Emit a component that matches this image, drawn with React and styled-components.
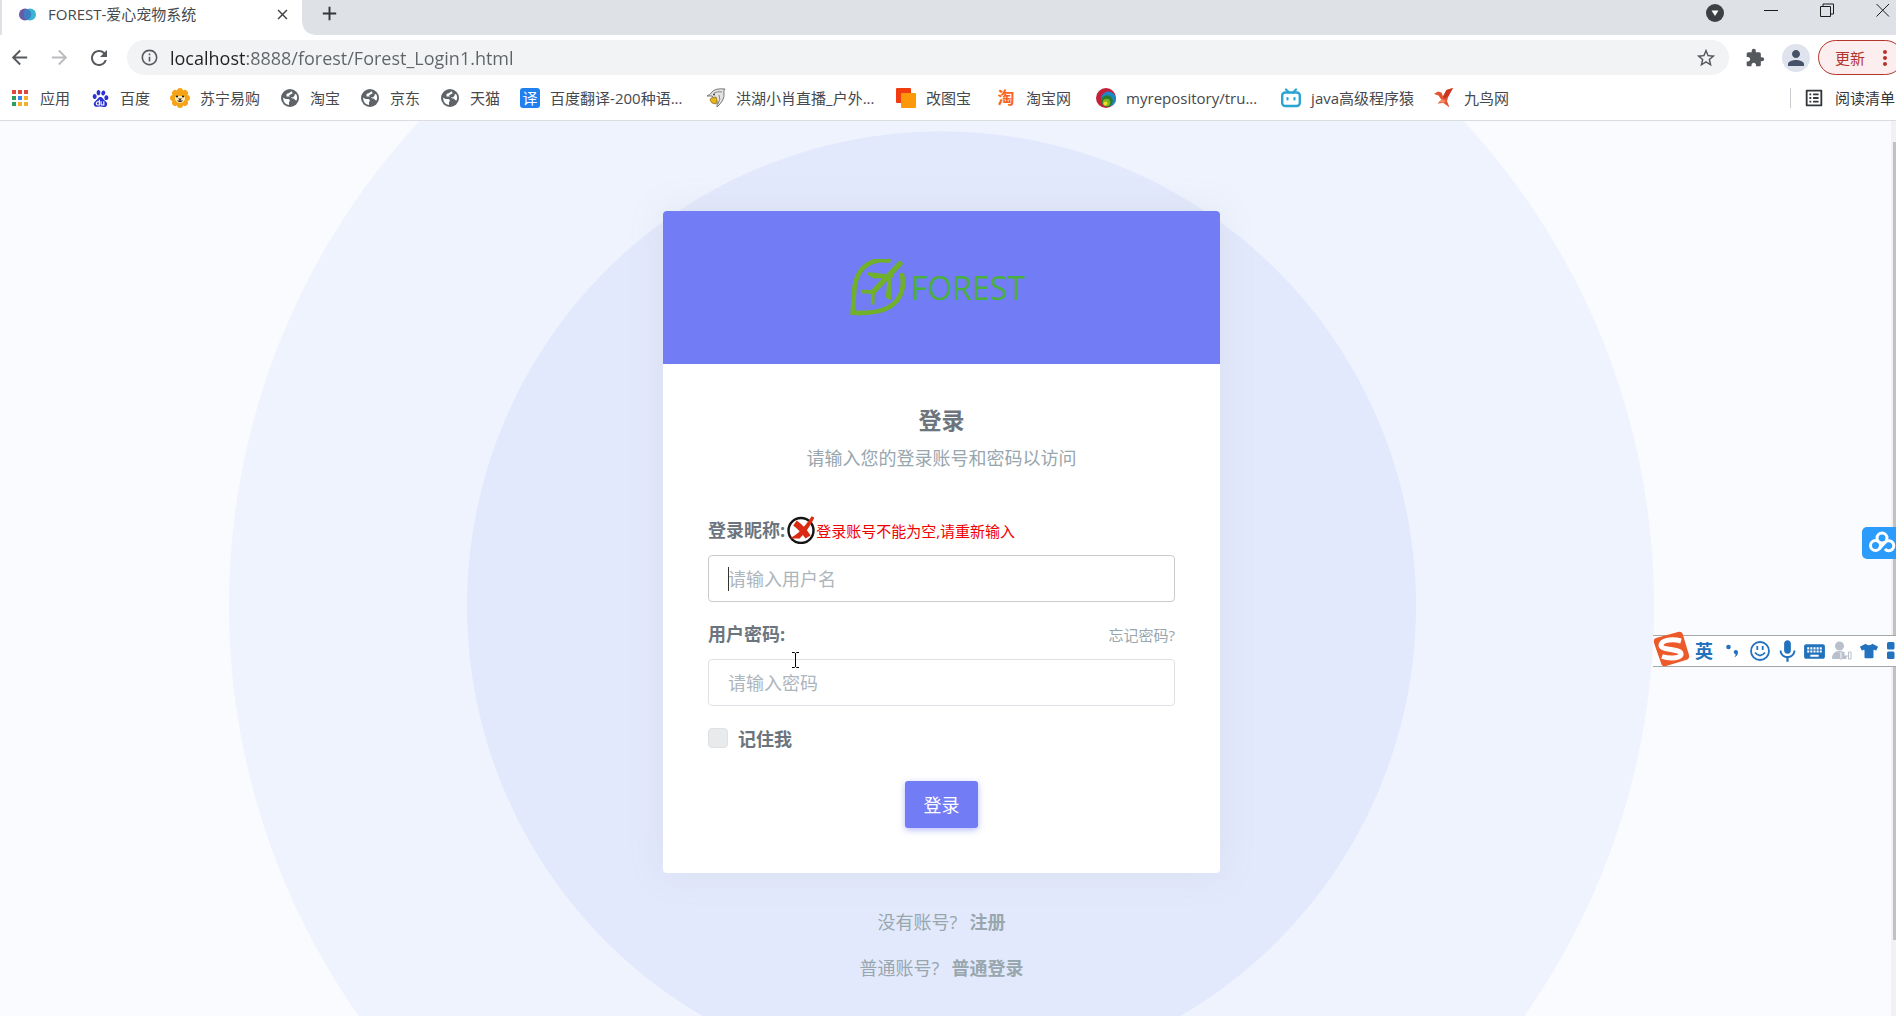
import React from "react";
import styled, { createGlobalStyle } from "styled-components";
import {
  MdAdd,
  MdArrowBack,
  MdArrowForward,
  MdClose,
  MdExtension,
  MdInfoOutline,
  MdKeyboard,
  MdListAlt,
  MdMic,
  MdMoreVert,
  MdPerson,
  MdRefresh,
  MdStarBorder,
} from "react-icons/md";
import { SiBaidu } from "react-icons/si";
import { FaTshirt } from "react-icons/fa";

const GlobalStyle = createGlobalStyle`
  * { box-sizing: border-box; }
  body {
    margin: 0;
    overflow: hidden;
    font-family: "Open Sans", "Noto Sans CJK SC", sans-serif;
  }
  button, input { font-family: inherit; }
  a { color: inherit; text-decoration: none; }
  svg { flex: none; }
`;

const Window = styled.div`
  position: relative;
  display: flex;
  flex-direction: column;
  height: 100vh;
  overflow: hidden;
  background: #fff;
`;

/* Browser chrome */

const IconButton = styled.button`
  display: flex;
  align-items: center;
  justify-content: center;
  flex: none;
  width: ${(p) => p.$size || 24}px;
  height: ${(p) => p.$size || 24}px;
  padding: 0;
  border: 0;
  border-radius: 50%;
  background: ${(p) => p.$bg || "transparent"};
  color: ${(p) => p.$color || "#55585d"};
`;

const TabStrip = styled.div`
  display: flex;
  height: 35px;
  padding-left: 2px;
  background: #dee1e6;
`;

const Tab = styled.div`
  display: flex;
  align-items: center;
  height: 28px;
  padding: 0 8px 0 17px;
  color: #45494d;
  font-size: 15px;
  line-height: 24px;
`;

const TabShape = styled.div`
  width: 300px;
  background: #fff;
`;

const TabFoot = styled.div`
  align-self: flex-end;
  width: 12px;
  height: 12px;
  margin-right: 3px;
  background: radial-gradient(circle at 100% 0, #dee1e6 11px, #fff 12px);
`;

const TabTitle = styled.span`
  flex: 1;
  padding-left: 12px;
`;

const StripTools = styled.div`
  display: flex;
  flex: 1;
  align-items: center;
  gap: 32px;
  height: 26px;
  padding-right: 1px;
`;

const TabSearch = styled.div`
  margin-left: auto;
`;

const WindowButtons = styled.div`
  display: flex;
  align-items: center;
  align-self: flex-start;
  gap: 32px;
  height: 20px;
`;

const Toolbar = styled.div`
  display: flex;
  align-items: center;
  height: 45px;
  padding-left: 7px;
`;

const NavButtons = styled.div`
  display: flex;
  gap: 16px;
  margin-right: 16px;
`;

const AddressBar = styled.div`
  display: flex;
  flex: 1;
  align-items: center;
  height: 35px;
  padding: 0 11px 0 10px;
  border-radius: 18px;
  background: #f1f3f4;
`;

const AddressInput = styled.input`
  flex: 1;
  min-width: 0;
  height: 30px;
  margin-left: 9px;
  padding: 0;
  border: 0;
  outline: 0;
  background: linear-gradient(90deg, #202124 76px, #5f6368 76px);
  background-clip: text;
  color: transparent;
  font-size: 18px;
`;

const ToolbarTools = styled.div`
  display: flex;
  align-items: center;
  gap: 15px;
  margin-left: 14px;
`;

const UpdateButton = styled.button`
  display: flex;
  align-items: center;
  flex: none;
  gap: 8px;
  width: 85px;
  height: 35px;
  margin: 0 -7px 0 -7px;
  padding: 0 0 0 16px;
  border: 1px solid #b3342c;
  border-radius: 18px;
  background: #fceeee;
  color: #b3342c;
  font-size: 15px;
  white-space: nowrap;
`;

const BookmarkBar = styled.nav`
  display: flex;
  align-items: center;
  gap: 20px;
  height: 41px;
  padding: 0 1px 4px 10px;
  border-bottom: 1px solid #dadce0;
  color: #45494d;
  font-size: 15px;
  line-height: 24px;
  white-space: nowrap;
`;

const Bookmark = styled.a`
  display: flex;
  align-items: center;
  gap: 10px;
`;

const BookmarkLabel = styled.span`
  min-width: ${(p) => p.$min || 0}px;
`;

const BookmarkIcon = styled.span`
  display: flex;
  align-items: center;
  justify-content: center;
  width: 20px;
  height: 20px;
  border-radius: 3px;
  background: ${(p) => p.$bg || "transparent"};
  color: ${(p) => p.$color || "#5f6368"};
  font-weight: ${(p) => (p.$bold ? 700 : 400)};
  font-size: ${(p) => (p.$bold ? 17 : 15)}px;
  line-height: 20px;
`;

const ReadingList = styled.button`
  display: flex;
  align-items: center;
  gap: 10px;
  height: 20px;
  margin-left: auto;
  padding: 0 0 0 12px;
  border: 0;
  border-left: 1px solid #c8cbd0;
  background: transparent;
  color: #33363a;
  font-size: 15px;
  line-height: 20px;
`;

/* Page */

const Viewport = styled.div`
  display: flex;
  flex: 1;
  min-height: 0;
  background: #fafbfe;
`;

const Page = styled.main`
  display: flex;
  flex: 1;
  flex-direction: column;
  align-items: center;
  padding: 90px 8px 0 0;
  background:
    radial-gradient(circle at 50% 485px, #e3e9fc 474px, transparent 475px),
    radial-gradient(circle at 50% 485px, #eef3fe 712px, transparent 713px);
  background-repeat: no-repeat;
  background-position: -4px 0;
`;

const ScrollTrack = styled.div`
  width: 5px;
  padding: 21px 0 76px 2px;
  background: #f1f1f1;
`;

const ScrollThumb = styled.div`
  height: 100%;
  background: #c1c1c1;
`;

const Card = styled.section`
  width: 557px;
  overflow: hidden;
  border-radius: 4px;
  background: #fff;
`;

const CardShadow = styled.div`
  border-radius: 4px;
  box-shadow: 0 0 35px rgba(154, 161, 171, 0.15);
`;

const CardHeader = styled.header`
  display: flex;
  align-items: center;
  justify-content: center;
  height: 153px;
  padding-right: 8px;
  background: #727cf5;
`;

const Brand = styled.a`
  display: flex;
  align-items: center;
  gap: 5px;
  color: #48b03c;
  font-weight: 500;
  font-size: 32px;
  line-height: 58px;
`;

const Form = styled.form`
  padding: 44px 45px 45px;
  color: #6c757d;
  font-size: 18px;
`;

const Title = styled.h1`
  margin: 0 0 12px;
  font-size: 23px;
  line-height: 24px;
  text-align: center;
`;

const Subtitle = styled.p`
  margin: 0 0 44px;
  color: #98a6ad;
  line-height: 28px;
  text-align: center;
`;

const Field = styled.div`
  margin-bottom: ${(p) => (p.$last ? 22 : 18)}px;
`;

const FieldHead = styled.div`
  display: flex;
  align-items: center;
  height: 28px;
  margin-bottom: 11px;
`;

const Label = styled.label`
  font-weight: 700;
  line-height: 28px;
`;

const ErrorText = styled.span`
  display: flex;
  align-items: center;
  margin-left: 2px;
  color: #f00000;
  font-size: 15px;
`;

const ForgotLink = styled.a`
  margin-left: auto;
  color: #98a6ad;
  font-size: 15px;
`;

const InputBox = styled.div`
  position: relative;
`;

const TextInput = styled.input`
  display: block;
  width: 100%;
  height: 47px;
  padding: 0 19px;
  border: 1px solid ${(p) => (p.$active ? "#c8cbcd" : "#dee2e6")};
  border-radius: 4px;
  outline: 0;
  background: #fff;
  color: #6c757d;
  font-size: 18px;
  &::placeholder { color: #adb5bd; opacity: 1; }
`;

const Caret = styled.span`
  position: absolute;
  top: 12px;
  left: 20px;
  width: 1px;
  height: 24px;
  background: #333;
`;

const Remember = styled.label`
  display: flex;
  align-items: center;
  gap: 10px;
  height: 20px;
  margin-bottom: 33px;
  font-weight: 700;
`;

const CheckBox = styled.input`
  width: 20px;
  height: 20px;
  margin: 0;
  border: 1px solid #dee2e6;
  border-radius: 4px;
  appearance: none;
  background: #e9eaec;
`;

const SubmitButton = styled.button`
  display: block;
  width: 73px;
  height: 47px;
  margin: 0 auto;
  padding: 0 0 2px;
  border: 0;
  border-radius: 3px;
  background: #727cf5;
  box-shadow: 0 2px 6px rgba(114, 124, 245, 0.5);
  color: #fff;
  font-size: 18px;
`;

const Footer = styled.footer`
  display: flex;
  flex-direction: column;
  align-items: center;
  gap: 18px;
  margin-top: 35px;
  color: #98a6ad;
  font-size: 18px;
  line-height: 28px;
`;

const FooterLine = styled.p`
  display: flex;
  gap: 12px;
  margin: 0;
`;

/* Floating desktop widgets */

const DiskBadge = styled.button`
  position: absolute;
  top: 527px;
  right: 0;
  width: 34px;
  height: 32px;
  padding: 3px 0 0 6px;
  border: 0;
  border-radius: 5px 0 0 5px;
  background: #2b9cfb;
`;

const ImeBar = styled.div`
  position: absolute;
  top: 635px;
  right: -11px;
  display: flex;
  align-items: center;
  gap: 8px;
  height: 32px;
  border: 1px solid #a5a7ab;
  border-left: 0;
  background: #fff;
  color: #2272bd;
`;

const ImeLogo = styled.span`
  display: flex;
  width: 37px;
  height: 36px;
  margin: -4px -4px 0 0;
`;

const ImeMode = styled.button`
  width: 20px;
  padding: 0;
  border: 0;
  background: transparent;
  color: inherit;
  font-weight: 700;
  font-size: 18px;
  line-height: 28px;
`;

const ImeItem = styled.span`
  display: flex;
  align-items: center;
  justify-content: center;
  width: ${(p) => p.$w || 20}px;
`;

const Pointer = styled.svg`
  position: absolute;
  top: 652px;
  left: calc(50% - 156px);
`;

const Favicon = () => (
  <svg width="17" height="13" viewBox="0 0 17 13">
    <circle cx="6" cy="6.500" r="6" fill="#6a5aa8" />
    <circle cx="11" cy="6.500" r="6" fill="#3bb3d3" />
    <path d="M8.500 1a6 6 0 0 1 0 11a6 6 0 0 1 0-11" fill="#3b7fc0" />
  </svg>
);

const DropMark = () => (
  <svg width="18" height="18" viewBox="0 0 18 18">
    <circle cx="9" cy="9" r="9" fill="#3c4043" />
    <path d="M5.500 6.500h7L9 12z" fill="#fff" />
  </svg>
);

const winPaths = {
  min: "M0 7.500h14",
  max: "M.5 3.500h10v10h-10zM3 3.500V1h10.500v10H11",
  close: "M.5 1l12.500 12.500M13 1L.5 13.500",
};
const WinGlyph = ({ kind }) => (
  <svg width="14" height="14" viewBox="0 0 14 14" fill="none" stroke="#1c1c1c" strokeWidth="1">
    <path d={winPaths[kind]} />
  </svg>
);

const appColors = ["#dd4b3e", "#dd4b3e", "#dd4b3e", "#2e9e5b", "#3b84f0", "#f2b02b", "#2e9e5b", "#f2b02b", "#f2b02b"];
const AppsIcon = () => (
  <svg width="18" height="18" viewBox="0 0 18 18">
    {appColors.map((c, i) => (
      <rect key={i} x={1 + (i % 3) * 6} y={1 + Math.floor(i / 3) * 6} width="4" height="4" fill={c} />
    ))}
  </svg>
);

const GlobeIcon = () => (
  <svg width="18" height="18" viewBox="0 0 18 18">
    <circle cx="9" cy="9" r="9" fill="#5f6368" />
    <path d="M2 8.500L4.500 10h3q1.500.5 1.500 2l-1 1v3q-5.500-.5-6-7.500z" fill="#fff" />
    <path d="M10.500 2.200L8 4 5.500 5v2.500h4l1.500 2h2l1 1.500 1.500.5q1.500-3.500-.5-6.500l-2 .5-1-1z" fill="#fff" />
    <path d="M8 6.500l4-2.500 2 2-2 2.500-3-.5z" fill="#5f6368" />
  </svg>
);

const LionIcon = () => (
  <svg width="20" height="20" viewBox="0 0 20 20">
    <g fill="#f6a417">
      <circle cx="10" cy="10" r="8" />
      {[0, 45, 90, 135, 180, 225, 270, 315].map((a) => (
        <circle key={a} cx="10" cy="3" r="3" transform={`rotate(${a} 10 10)`} />
      ))}
    </g>
    <path d="M5 9q5-2 10 0v2.500q-2 3.500-5 3.500t-5-3.500z" fill="#ffe9b8" />
    <circle cx="7" cy="8.500" r="1.100" fill="#222" />
    <circle cx="13" cy="8.500" r="1.100" fill="#222" />
    <path d="M8 10.500h4l-2 2zM7 12.500q3 3 6 0" fill="#222" />
  </svg>
);

const DolphinIcon = () => (
  <svg width="20" height="20" viewBox="0 0 20 20" strokeLinejoin="round">
    <path d="M1 8q3-1 5-4q3-4 13-3q-2 2-1 4q1 7-7 14q1-5-1-8q-3-1-4-3z" fill="#e3e3e3" stroke="#777" />
    <path d="M8 5q4-2 8-1M13 7q2 4-1 9" fill="none" stroke="#888" />
    <path d="M5 10l5-1q2 4 0 7q-5 0-6-4z" fill="#e9b51c" stroke="#8a6a16" strokeWidth=".7" />
    <circle cx="8" cy="6.500" r="1" fill="#444" />
  </svg>
);

const SquaresIcon = () => (
  <svg width="20" height="20" viewBox="0 0 20 20">
    <rect y="0" width="15" height="15" rx="1" fill="#f03c10" />
    <rect x="5" y="5" width="15" height="15" rx="1" fill="#fd980a" />
  </svg>
);

const RepoIcon = () => (
  <svg width="20" height="20" viewBox="0 0 20 20">
    <circle cx="10" cy="10" r="10" fill="#c3203c" />
    <circle cx="12.500" cy="11" r="7.500" fill="#1e86c4" />
    <circle cx="11" cy="13" r="5.800" fill="#2c7a2c" />
    <circle cx="10.500" cy="14.500" r="3.800" fill="#7db51f" />
    <circle cx="9.500" cy="15.500" r="2" fill="#f1dc2c" />
  </svg>
);

const TvIcon = () => (
  <svg width="20" height="20" viewBox="0 0 20 20" fill="none" stroke="#2ba4d4" strokeLinecap="round">
    <rect x="1.200" y="4.500" width="17.600" height="13.500" rx="3" strokeWidth="2.400" />
    <path d="M5 1.500l3 3M15 1.500l-3 3" strokeWidth="2.200" />
    <path d="M6.500 10v1.500M13.500 10v1.500" strokeWidth="2.200" />
  </svg>
);

const BirdIcon = () => (
  <svg width="20" height="20" viewBox="0 0 20 20">
    <path d="M0 6l4-2.500 3.500 1L9 8.500 12.500 2 19 0l-4.500 8-1.500 5 2.500 6.500-6-4.500-6 .5 4-3.500-3-4.500z" fill="#e4532f" />
    <path d="M9 8.500L12.500 2 19 0l-4.500 8-4 3z" fill="#c9371f" />
    <path d="M5 14l3-3 4 2-3 2z" fill="#f18a66" />
  </svg>
);

const ForestLogo = () => (
  <svg width="56" height="58" viewBox="0 6 168 174" fill="none" stroke="#70b02a" strokeWidth="14">
    <path d="M122 11C67 2 14 26 12 112L8 167C72 171 116 162 140 131C160 107 162 76 155 48" />
    <path d="M150 20L68 106" strokeWidth="16" strokeLinecap="round" />
    <path d="M56 50L72 60L126 58zM119 124L112 118L118 58z" fill="#70b02a" strokeWidth="9" strokeLinejoin="round" />
    <path d="M38 104L69 105L68 138" strokeWidth="11" strokeLinecap="round" />
  </svg>
);

const CrossIcon = () => (
  <svg width="29" height="28" viewBox="0 0 29 28" fill="none">
    <circle cx="14" cy="14.500" r="12.500" stroke="#151515" strokeWidth="2.400" />
    <path d="M8 7q8 6 13 14" stroke="#dc2a12" strokeWidth="6" />
    <path d="M8 21q8-5 18-20q-6 12-14 20z" fill="#dc2a12" stroke="#dc2a12" strokeWidth="3" />
  </svg>
);

const DiskIcon = () => (
  <svg width="28" height="24" viewBox="0 0 28 24" fill="none" stroke="#fff" strokeWidth="3">
    <circle cx="14" cy="7" r="5" />
    <circle cx="7.500" cy="14.500" r="5" />
    <path d="M11 18L17 11.500A5 5 0 1 1 17 18" />
  </svg>
);

const SogouIcon = () => (
  <svg width="37" height="36" viewBox="0 0 37 36">
    <path d="M3 7L25 1q4-1 5 3l6 20q1 4-3 5L13 35q-4 1-5-3L1 12q-1-4 2-5z" fill="#ec5a2a" />
    <path d="M28 10C17 7 8 10 8 14.500s19 3.500 20 8-10 6-19 3" fill="none" stroke="#fff" strokeWidth="5" />
  </svg>
);

const SmileIcon = () => (
  <svg width="20" height="20" viewBox="0 0 20 20" fill="none" stroke="currentColor" strokeWidth="1.800">
    <circle cx="10" cy="10" r="9" />
    <path d="M7.300 5v4M12.700 5v4M5 11.500q5 6 10 0" />
  </svg>
);

const PunctIcon = () => (
  <svg width="12" height="14" viewBox="0 0 12 14" fill="currentColor">
    <circle cx="2.500" cy="3" r="2.300" />
    <path d="M8 7a2.200 2.200 0 0 1 4 1q0 4-4 5.500q2-2 1.500-3.500a2 2 0 0 1-1.500-3" />
  </svg>
);

const KidIcon = () => (
  <svg width="20" height="20" viewBox="0 0 20 20" fill="#b9c0cc">
    <circle cx="7.500" cy="5" r="4.500" />
    <path d="M0 18q0-8 7.500-8t7 8z" />
    <path d="M7 11h3v7H8v-6M12 11v4h5M16.500 11h2.500v7h-2.500z" fill="#fff" stroke="#b9c0cc" />
  </svg>
);

const GridIcon = () => (
  <svg width="18" height="18" viewBox="0 0 18 18" fill="currentColor">
    <rect width="7.500" height="7.500" rx="1.500" />
    <rect x="9.500" width="7.500" height="7.500" rx="1.500" />
    <rect y="9.500" width="7.500" height="7.500" rx="1.500" />
    <rect x="9.500" y="9.500" width="7.500" height="7.500" rx="1.500" />
  </svg>
);

const bookmarks = [
  { label: "应用", icon: <AppsIcon /> },
  { label: "百度", icon: <SiBaidu size={17} />, color: "#2a32d0" },
  { label: "苏宁易购", icon: <LionIcon /> },
  { label: "淘宝", icon: <GlobeIcon /> },
  { label: "京东", icon: <GlobeIcon /> },
  { label: "天猫", icon: <GlobeIcon /> },
  { label: "百度翻译-200种语...", icon: "译", color: "#fff", bg: "#1f80ee", min: 136 },
  { label: "洪湖小肖直播_户外...", icon: <DolphinIcon />, min: 140 },
  { label: "改图宝", icon: <SquaresIcon />, min: 50 },
  { label: "淘宝网", icon: "淘", color: "#fa6420", bold: true, min: 50 },
  { label: "myrepository/tru...", icon: <RepoIcon />, min: 135 },
  { label: "java高级程序猿", icon: <TvIcon />, min: 103 },
  { label: "九鸟网", icon: <BirdIcon /> },
];

export default function App() {
  return (
    <Window>
      <GlobalStyle />
      <TabStrip>
        <TabShape>
          <Tab>
            <Favicon />
            <TabTitle>FOREST-爱心宠物系统</TabTitle>
            <IconButton aria-label="关闭标签页" $color="#3c4043"><MdClose size={17} /></IconButton>
          </Tab>
        </TabShape>
        <TabFoot />
        <StripTools>
          <IconButton aria-label="新标签页" $color="#33363a"><MdAdd size={23} /></IconButton>
          <TabSearch>
            <IconButton aria-label="搜索标签页"><DropMark /></IconButton>
          </TabSearch>
          <WindowButtons>
            <IconButton aria-label="最小化"><WinGlyph kind="min" /></IconButton>
            <IconButton aria-label="还原"><WinGlyph kind="max" /></IconButton>
            <IconButton aria-label="关闭"><WinGlyph kind="close" /></IconButton>
          </WindowButtons>
        </StripTools>
      </TabStrip>

      <Toolbar>
        <NavButtons>
          <IconButton aria-label="后退"><MdArrowBack size={23} /></IconButton>
          <IconButton aria-label="前进" $color="#b9bbbe"><MdArrowForward size={23} /></IconButton>
          <IconButton aria-label="刷新"><MdRefresh size={24} /></IconButton>
        </NavButtons>
        <AddressBar>
          <IconButton aria-label="网站信息"><MdInfoOutline size={19} /></IconButton>
          <AddressInput aria-label="地址" defaultValue="localhost:8888/forest/Forest_Login1.html" />
          <IconButton aria-label="收藏"><MdStarBorder size={22} /></IconButton>
        </AddressBar>
        <ToolbarTools>
          <IconButton aria-label="扩展程序"><MdExtension size={20} /></IconButton>
          <IconButton aria-label="用户" $size={28} $bg="#dfe3ee" $color="#465268"><MdPerson size={24} /></IconButton>
          <UpdateButton>更新<MdMoreVert size={24} /></UpdateButton>
        </ToolbarTools>
      </Toolbar>

      <BookmarkBar>
        {bookmarks.map((b) => (
          <Bookmark href="#" key={b.label}>
            <BookmarkIcon $color={b.color} $bg={b.bg} $bold={b.bold}>{b.icon}</BookmarkIcon>
            <BookmarkLabel $min={b.min}>{b.label}</BookmarkLabel>
          </Bookmark>
        ))}
        <ReadingList><MdListAlt size={22} />阅读清单</ReadingList>
      </BookmarkBar>

      <Viewport>
        <Page>
          <CardShadow>
            <Card>
              <CardHeader>
                <Brand href="#"><ForestLogo />FOREST</Brand>
              </CardHeader>
              <Form onSubmit={(e) => e.preventDefault()}>
                <Title>登录</Title>
                <Subtitle>请输入您的登录账号和密码以访问</Subtitle>
                <Field>
                  <FieldHead>
                    <Label htmlFor="account">登录昵称:</Label>
                    <ErrorText role="alert"><CrossIcon />登录账号不能为空,请重新输入</ErrorText>
                  </FieldHead>
                  <InputBox>
                    <TextInput id="account" type="text" placeholder="请输入用户名" $active />
                    <Caret />
                  </InputBox>
                </Field>
                <Field $last>
                  <FieldHead>
                    <Label htmlFor="password">用户密码:</Label>
                    <ForgotLink href="#">忘记密码?</ForgotLink>
                  </FieldHead>
                  <TextInput id="password" type="password" placeholder="请输入密码" />
                </Field>
                <Remember><CheckBox type="checkbox" />记住我</Remember>
                <SubmitButton type="submit">登录</SubmitButton>
              </Form>
            </Card>
          </CardShadow>
          <Footer>
            <FooterLine>没有账号?<a href="#"><b>注册</b></a></FooterLine>
            <FooterLine>普通账号?<a href="#"><b>普通登录</b></a></FooterLine>
          </Footer>
        </Page>
        <ScrollTrack><ScrollThumb /></ScrollTrack>
      </Viewport>

      <DiskBadge aria-label="网盘"><DiskIcon /></DiskBadge>
      <ImeBar>
        <ImeLogo><SogouIcon /></ImeLogo>
        <ImeMode>英</ImeMode>
        <ImeItem><PunctIcon /></ImeItem>
        <ImeItem><SmileIcon /></ImeItem>
        <ImeItem $w={18}><MdMic size={27} /></ImeItem>
        <ImeItem><MdKeyboard size={25} /></ImeItem>
        <ImeItem><KidIcon /></ImeItem>
        <ImeItem $w={18}><FaTshirt size={18} /></ImeItem>
        <ImeItem><GridIcon /></ImeItem>
      </ImeBar>
      <Pointer width="7" height="16" viewBox="0 0 7 16" fill="none" stroke="#000" strokeWidth="1">
        <path d="M0 .5h2.500l1 1 1-1H7M3.500 1v14M0 15.500h2.500l1-1 1 1H7" />
      </Pointer>
    </Window>
  );
}
